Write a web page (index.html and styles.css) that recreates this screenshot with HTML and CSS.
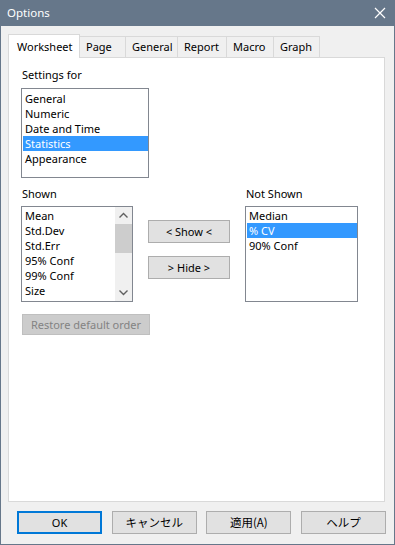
FILE: index.html
```html
<!DOCTYPE html>
<html>
<head>
<meta charset="utf-8">
<link rel="stylesheet" href="styles.css">
</head>
<body>
<div class="window">
  <div class="titlebar">
    <span class="title">Options</span>
    <svg class="close" width="12" height="12" viewBox="0 0 12 12"><path d="M1 1 L11 11 M11 1 L1 11" stroke="#fff" stroke-width="1.2" fill="none"/></svg>
  </div>
  <div class="client">
    <div class="tabs">
      <div class="tab active">Worksheet</div>
      <div class="tab t-page">Page</div>
      <div class="tab t-general">General</div>
      <div class="tab t-report">Report</div>
      <div class="tab t-macro">Macro</div>
      <div class="tab t-graph">Graph</div>
    </div>
    <div class="pane">
      <div class="label">Settings for</div>
      <div class="listbox settings">
        <div class="items">
          <div class="item">General</div>
          <div class="item">Numeric</div>
          <div class="item">Date and Time</div>
          <div class="item sel">Statistics</div>
          <div class="item">Appearance</div>
        </div>
      </div>
      <div class="columns">
        <div class="col col-shown">
          <div class="label">Shown</div>
          <div class="listbox shown">
            <div class="items">
              <div class="item">Mean</div>
              <div class="item">Std.Dev</div>
              <div class="item">Std.Err</div>
              <div class="item">95% Conf</div>
              <div class="item">99% Conf</div>
              <div class="item">Size</div>
            </div>
            <div class="scrollbar">
              <svg class="arrow" width="17" height="17" viewBox="0 0 17 17"><path d="M4.5 10.5 L8.5 6.5 L12.5 10.5" stroke="#606060" stroke-width="1.4" fill="none"/></svg>
              <div class="track"><div class="thumb"></div></div>
              <svg class="arrow" width="17" height="17" viewBox="0 0 17 17"><path d="M4.5 6.5 L8.5 10.5 L12.5 6.5" stroke="#606060" stroke-width="1.4" fill="none"/></svg>
            </div>
          </div>
          <div class="btn disabled restore">Restore default order</div>
        </div>
        <div class="col col-mid">
          <div class="btn mid">&lt; Show &lt;</div>
          <div class="btn mid">&gt; Hide &gt;</div>
        </div>
        <div class="col col-not">
          <div class="label">Not Shown</div>
          <div class="listbox notshown">
            <div class="items">
              <div class="item">Median</div>
              <div class="item sel">% CV</div>
              <div class="item">90% Conf</div>
            </div>
          </div>
        </div>
      </div>
    </div>
    <div class="footer">
      <div class="btn foot default">OK</div>
      <div class="btn foot jp">キャンセル</div>
      <div class="btn foot jp">適用(A)</div>
      <div class="btn foot jp">ヘルプ</div>
    </div>
  </div>
</div>
</body>
</html>
```
FILE: styles.css
```css
html, body {
  margin: 0;
  padding: 0;
}
body {
  width: 395px;
  height: 545px;
  overflow: hidden;
  font-family: "Noto Sans", "Noto Sans CJK JP", sans-serif;
  font-size: 11px;
  color: #000;
}
.window {
  width: 395px;
  height: 545px;
  box-sizing: border-box;
  border: 1px solid #66778a;
  border-top: none;
  background: #f0f0f0;
  display: flex;
  flex-direction: column;
}
.titlebar {
  height: 26px;
  margin: 0 -1px;
  background: #66778a;
  display: flex;
  align-items: center;
  justify-content: space-between;
  padding: 0 9px 0 7px;
  flex: none;
}
.title {
  color: #fff;
  font-size: 11.5px;
  line-height: 15px;
  padding-bottom: 1px;
}
.close {
  display: block;
  margin-top: -1px;
}
.client {
  flex: 1;
  display: flex;
  flex-direction: column;
  padding: 8px 0 0 7px;
}
.tabs {
  display: flex;
  align-items: flex-end;
  height: 23px;
  position: relative;
  z-index: 1;
}
.tab {
  box-sizing: border-box;
  height: 21px;
  border: 1px solid #d9d9d9;
  border-bottom: none;
  border-left: none;
  background: #f0f0f0;
  line-height: 19px;
  padding-left: 6px;
  margin-bottom: 0;
}
.tab.active {
  height: 24px;
  margin-bottom: -1px;
  background: #fff;
  border-left: 1px solid #d9d9d9;
  width: 72px;
  padding-left: 8px;
  line-height: 23px;
}
.t-page { width: 46px; }
.t-general { width: 52px; }
.t-report { width: 49px; }
.t-macro { width: 47px; }
.t-graph { width: 46px; }
.pane {
  box-sizing: border-box;
  width: 377px;
  height: 445px;
  background: #fff;
  border: 1px solid #d9d9d9;
  padding: 9px 12px 0 12px;
}
.label {
  line-height: 15px;
  height: 15px;
  padding-left: 1px;
}
.listbox {
  box-sizing: border-box;
  border: 1px solid #828790;
  background: #fff;
  display: flex;
  padding: 1px 0 1px 1px;
}
.items {
  flex: 1;
  min-width: 0;
}
.item {
  height: 15px;
  line-height: 15px;
  padding-left: 2px;
  white-space: nowrap;
}
.item.sel {
  background: #3399ff;
  color: #fff;
}
.settings {
  width: 128px;
  height: 90px;
  margin-top: 6px;
  padding-top: 2px;
}
.columns {
  display: flex;
  gap: 15px;
  margin-top: 8px;
}
.col-shown { width: 112px; }
.col-not { width: 113px; }
.col-mid {
  width: 82px;
  padding-top: 34px;
  display: flex;
  flex-direction: column;
  gap: 13px;
}
.shown, .notshown {
  height: 96px;
  margin-top: 5px;
}
.shown {
  padding: 1px 0 0 1px;
}
.scrollbar {
  width: 17px;
  background: #f0f0f0;
  display: flex;
  flex-direction: column;
  margin-top: -1px;
  margin-bottom: 0;
}
.arrow {
  display: block;
  flex: none;
}
.track {
  flex: 1;
  padding-top: 0;
}
.thumb {
  height: 29px;
  background: #cdcdcd;
}
.btn {
  box-sizing: border-box;
  border: 1px solid #adadad;
  background: #e1e1e1;
  text-align: center;
  white-space: nowrap;
}
.mid {
  height: 23px;
  line-height: 21px;
}
.restore {
  width: 128px;
  height: 21px;
  line-height: 19px;
  margin-top: 12px;
  margin-left: 1px;
  background: #cccccc;
  border-color: #bfbfbf;
  color: #838383;
}
.footer {
  display: flex;
  justify-content: space-between;
  padding: 9px 0 0 9px;
  width: 369px;
}
.foot {
  width: 85px;
  height: 23px;
  line-height: 21px;
}
.foot.jp {
  font-family: "Noto Sans CJK JP", sans-serif;
  font-size: 11.5px;
}
.foot.default {
  border: 2px solid #0078d7;
  line-height: 19px;
}
```
